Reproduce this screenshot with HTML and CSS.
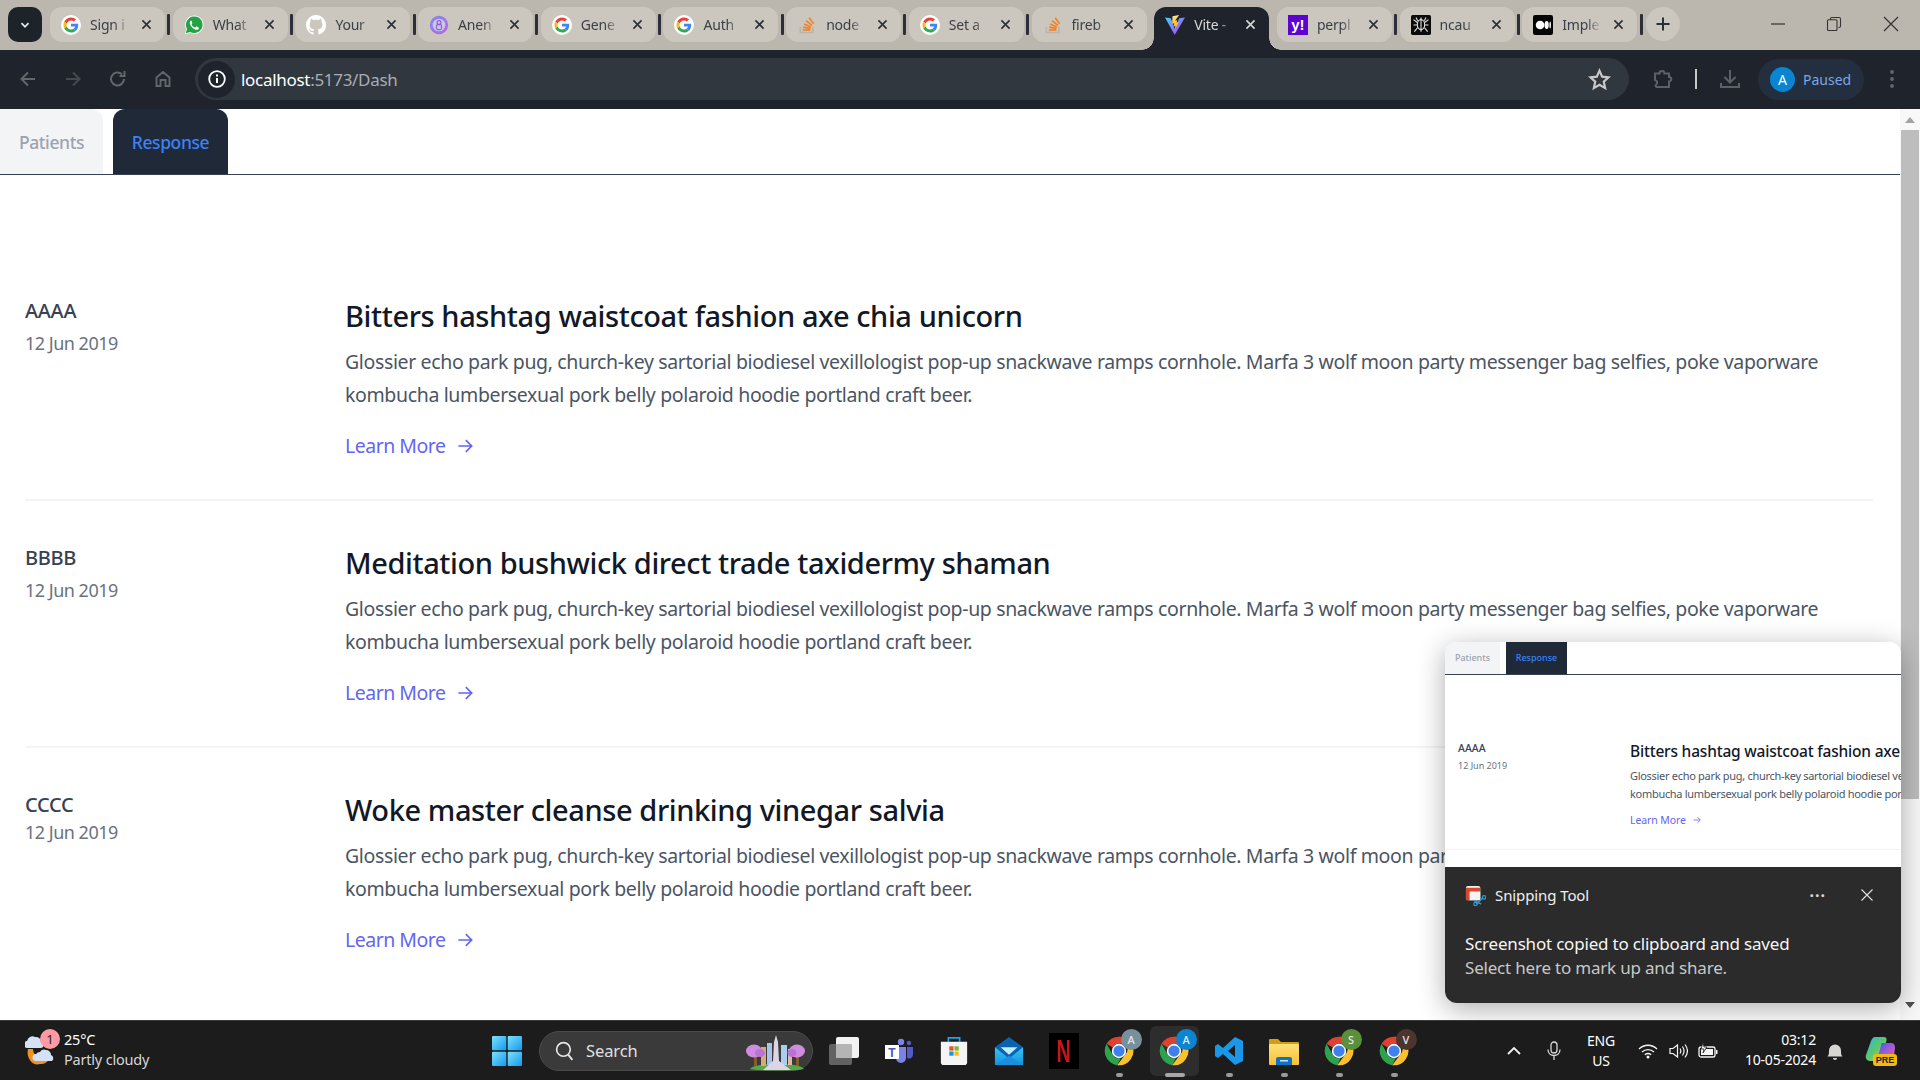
FILE: index.html
```html
<!DOCTYPE html>
<html lang="en">
<head>
<meta charset="utf-8">
<title>Vite + React</title>
<link rel="stylesheet" href="styles.css">
</head>
<body>
<svg class="defs" aria-hidden="true">
  <defs>
    <symbol id="i-g" viewBox="-8 -8 64 64">
      <circle cx="24" cy="24" r="32" fill="#fff"/>
      <path fill="#EA4335" d="M24 9.5c3.54 0 6.71 1.22 9.21 3.6l6.85-6.85C35.9 2.38 30.47 0 24 0 14.62 0 6.51 5.38 2.56 13.22l7.98 6.19C12.43 13.72 17.74 9.5 24 9.5z"/>
      <path fill="#4285F4" d="M46.98 24.55c0-1.57-.15-3.09-.38-4.55H24v9.02h12.94c-.58 2.96-2.26 5.48-4.78 7.18l7.73 6c4.51-4.18 7.09-10.36 7.09-17.65z"/>
      <path fill="#FBBC05" d="M10.53 28.59c-.48-1.45-.76-2.99-.76-4.59s.27-3.14.76-4.59l-7.98-6.19C.92 16.46 0 20.12 0 24c0 3.88.92 7.54 2.56 10.78l7.97-6.19z"/>
      <path fill="#34A853" d="M24 48c6.48 0 11.93-2.13 15.89-5.81l-7.73-6c-2.15 1.45-4.92 2.3-8.16 2.3-6.26 0-11.57-4.22-13.47-9.91l-7.98 6.19C6.51 42.62 14.62 48 24 48z"/>
    </symbol>
    <symbol id="i-wa" viewBox="0 0 24 24">
      <path fill="#fff" d="M1 23l1.8-6A11 11 0 1 1 7 21.2z"/>
      <path fill="#25a244" d="M2 22l1.7-5.2A10 10 0 1 1 7.2 20.3z"/>
      <path fill="#fff" d="M8.6 6.6c-.5 0-1.7 1-1.7 2.7 0 3 3.9 7.6 7.8 8.5 1.6.3 3-.8 3.1-2 .1-.5 0-.8-.2-.9l-2.4-1.2c-.3-.1-.5 0-.7.2l-.9 1.1c-.2.2-.4.2-.7.1-1.6-.7-2.8-1.8-3.7-3.4-.1-.3 0-.4.1-.6l.6-.8c.2-.2.2-.4.1-.6l-1-2.5c-.1-.5-.3-.6-1-.6z"/>
    </symbol>
    <symbol id="i-gh" viewBox="0 0 16 16">
      <path fill="#fff" d="M8 0C3.58 0 0 3.58 0 8c0 3.54 2.29 6.53 5.47 7.59.4.07.55-.17.55-.38 0-.19-.01-.82-.01-1.49-2.01.37-2.53-.49-2.69-.94-.09-.23-.48-.94-.82-1.13-.28-.15-.68-.52-.01-.53.63-.01 1.08.58 1.23.82.72 1.21 1.87.87 2.33.66.07-.52.28-.87.51-1.07-1.78-.2-3.64-.89-3.64-3.95 0-.87.31-1.59.82-2.15-.08-.2-.36-1.02.08-2.12 0 0 .67-.21 2.2.82.64-.18 1.32-.27 2-.27.68 0 1.36.09 2 .27 1.53-1.04 2.2-.82 2.2-.82.44 1.1.16 1.92.08 2.12.51.56.82 1.27.82 2.15 0 3.07-1.87 3.75-3.65 3.95.29.25.54.73.54 1.48 0 1.07-.01 1.93-.01 2.2 0 .21.15.46.55.38A8.013 8.013 0 0016 8c0-4.42-3.58-8-8-8z"/>
    </symbol>
    <linearGradient id="g-an" x1="0" y1="0" x2="1" y2="1"><stop offset="0" stop-color="#7a8cf0"/><stop offset="1" stop-color="#c263e0"/></linearGradient>
    <symbol id="i-an" viewBox="0 0 24 24">
      <circle cx="12" cy="12" r="11" fill="url(#g-an)"/>
      <circle cx="12" cy="12" r="7.6" fill="#cbc7e8"/>
      <circle cx="12" cy="9" r="2.3" fill="none" stroke="#8a5fd8" stroke-width="1.4"/>
      <rect x="9" y="11.5" width="6" height="6" rx="1.5" fill="none" stroke="#8a5fd8" stroke-width="1.4"/>
    </symbol>
    <symbol id="i-so" viewBox="0 0 24 24">
      <path fill="none" stroke="#b9b5ad" stroke-width="2" d="M4 14v7h15v-7"/>
      <path fill="none" stroke="#f48024" stroke-width="2" d="M7 18h9M7.4 14.6l8.8 1.8M8.6 10.7l8 3.8M11 6.8l6.9 5.7M14.6 3.3l5.3 7.1"/>
    </symbol>
    <linearGradient id="g-vt" x1="0" y1="0" x2="1" y2="1"><stop offset="0" stop-color="#41d1ff"/><stop offset="1" stop-color="#bd34fe"/></linearGradient>
    <linearGradient id="g-vb" x1="0" y1="0" x2="0" y2="1"><stop offset="0" stop-color="#ffea83"/><stop offset="1" stop-color="#ffa800"/></linearGradient>
    <symbol id="i-vite" viewBox="0 0 24 24">
      <path fill="url(#g-vt)" d="M0 3l11.6 21L24 3l-7 1-5.200 13L7 3.800z"/>
      <path fill="url(#g-vb)" d="M17 0 9 1.500l-.5 9 2.500-.5-.7 3.800 2.100-.5-.7 4.700 4.800-9.500-2.700.5 1-2.800-2.600.5z"/>
    </symbol>
    <symbol id="i-bug" viewBox="0 0 24 24">
      <rect width="24" height="24" rx="2" fill="#0b0b0b"/>
      <g fill="none" stroke="#e6e6e6" stroke-width="1.3">
        <ellipse cx="12" cy="11.5" rx="4.4" ry="6"/>
        <path d="M12 3v17M7.6 9 3 5.5M16.4 9 21 5.5M7.6 12H3M16.4 12H21M8 15l-4 5M16 15l4 5M8 7 6 3M16 7l2-4"/>
      </g>
    </symbol>
    <symbol id="i-med" viewBox="0 0 24 24">
      <rect width="24" height="24" rx="2.5" fill="#050505"/>
      <ellipse cx="8.5" cy="12" rx="5.2" ry="5.2" fill="#fff"/>
      <ellipse cx="16.4" cy="12" rx="2.5" ry="4.8" fill="#fff"/>
      <ellipse cx="20.6" cy="12" rx=".9" ry="4.3" fill="#fff"/>
    </symbol>
    <symbol id="i-close" viewBox="0 0 16 16">
      <path fill="none" stroke="currentColor" stroke-width="2" d="M3 3l10 10M13 3 3 13"/>
    </symbol>
    <symbol id="i-chrome" viewBox="0 0 48 48">
      <path fill="#e0402f" d="M24 1a23 23 0 0 1 20 11.500H24a11.500 11.500 0 0 0-10 5.800L4.100 12.500A23 23 0 0 1 24 1z"/>
      <path fill="#2fa24f" d="M4.100 12.500 14 29.800a11.500 11.500 0 0 0 13 5.300l-6 11.500A23 23 0 0 1 4.100 12.500z"/>
      <path fill="#fbc02d" d="M44 12.500A23 23 0 0 1 21 46.600l13-17a11.500 11.500 0 0 0 0-17.100z"/>
      <circle cx="24" cy="24" r="11.500" fill="#fff"/>
      <circle cx="24" cy="24" r="9" fill="#3f80ee"/>
    </symbol>
    <linearGradient id="g-win" x1="0" y1="0" x2="1" y2="1"><stop offset="0" stop-color="#7fe0f5"/><stop offset="1" stop-color="#0f9bf5"/></linearGradient>
    <linearGradient id="g-mail" x1="0" y1="0" x2="0" y2="1"><stop offset="0" stop-color="#37c6f5"/><stop offset="1" stop-color="#1590e0"/></linearGradient>
    <linearGradient id="g-cp" x1="0" y1="0" x2="1" y2="1"><stop offset="0" stop-color="#2fb4f0"/><stop offset=".5" stop-color="#5bc86a"/><stop offset="1" stop-color="#f5c63c"/></linearGradient>
    <linearGradient id="g-cp2" x1="0" y1="0" x2="1" y2="1"><stop offset="0" stop-color="#2a62e0"/><stop offset=".5" stop-color="#a55ad8"/><stop offset="1" stop-color="#f0609a"/></linearGradient>
    <linearGradient id="g-fold" x1="0" y1="0" x2="0" y2="1"><stop offset="0" stop-color="#ffe07a"/><stop offset="1" stop-color="#f8c22f"/></linearGradient>
  </defs>
</svg>

<header class="tabstrip">
  <button class="tab-menu"><svg class="i12" viewBox="0 0 12 12"><path d="M2.500 4.200 6 7.800l3.500-3.600" fill="none" stroke="#e8e8e8" stroke-width="1.800"/></svg></button>
  <div class="tab"><svg class="fav"><use href="#i-g"/></svg><span class="tab-t">Sign i</span><svg class="tab-x"><use href="#i-close"/></svg></div><i class="sep"></i>
  <div class="tab"><svg class="fav"><use href="#i-wa"/></svg><span class="tab-t">What</span><svg class="tab-x"><use href="#i-close"/></svg></div><i class="sep"></i>
  <div class="tab"><svg class="fav"><use href="#i-gh"/></svg><span class="tab-t">Your</span><svg class="tab-x"><use href="#i-close"/></svg></div><i class="sep"></i>
  <div class="tab"><svg class="fav"><use href="#i-an"/></svg><span class="tab-t">Anen</span><svg class="tab-x"><use href="#i-close"/></svg></div><i class="sep"></i>
  <div class="tab"><svg class="fav"><use href="#i-g"/></svg><span class="tab-t">Gene</span><svg class="tab-x"><use href="#i-close"/></svg></div><i class="sep"></i>
  <div class="tab"><svg class="fav"><use href="#i-g"/></svg><span class="tab-t">Auth</span><svg class="tab-x"><use href="#i-close"/></svg></div><i class="sep"></i>
  <div class="tab"><svg class="fav"><use href="#i-so"/></svg><span class="tab-t">node</span><svg class="tab-x"><use href="#i-close"/></svg></div><i class="sep"></i>
  <div class="tab"><svg class="fav"><use href="#i-g"/></svg><span class="tab-t">Set a</span><svg class="tab-x"><use href="#i-close"/></svg></div><i class="sep"></i>
  <div class="tab"><svg class="fav"><use href="#i-so"/></svg><span class="tab-t">fireb</span><svg class="tab-x"><use href="#i-close"/></svg></div><i class="sep sep-off"></i>
  <div class="tab tab-on"><svg class="fav"><use href="#i-vite"/></svg><span class="tab-t">Vite -</span><svg class="tab-x"><use href="#i-close"/></svg></div><i class="sep sep-off"></i>
  <div class="tab"><span class="fav fav-y">y!</span><span class="tab-t">perpl</span><svg class="tab-x"><use href="#i-close"/></svg></div><i class="sep"></i>
  <div class="tab"><svg class="fav"><use href="#i-bug"/></svg><span class="tab-t">ncau</span><svg class="tab-x"><use href="#i-close"/></svg></div><i class="sep"></i>
  <div class="tab"><svg class="fav"><use href="#i-med"/></svg><span class="tab-t">Imple</span><svg class="tab-x"><use href="#i-close"/></svg></div><i class="sep"></i>
  <button class="tab-new"><svg class="i16" viewBox="0 0 16 16"><path d="M8 1.500v13M1.500 8h13" stroke="#2a2e35" stroke-width="2" fill="none"/></svg></button>
  <div class="win-ctl">
    <svg class="i16" viewBox="0 0 16 16"><path d="M1 8h14" stroke="#333" stroke-width="1.200"/></svg>
    <svg class="i16" viewBox="0 0 16 16"><path d="M4.500 3.500V2.800c0-.9.600-1.300 1.300-1.300H13c.8 0 1.500.6 1.500 1.500v7c0 .8-.5 1.500-1.500 1.500h-.5M2.500 3.800h7.500c.6 0 1 .4 1 1v8.700c0 .6-.4 1-1 1H2.500c-.6 0-1-.4-1-1V4.800c0-.6.400-1 1-1z" fill="none" stroke="#333" stroke-width="1.100"/></svg>
    <svg class="i16" viewBox="0 0 16 16"><path d="M1 1l14 14M15 1 1 15" stroke="#333" stroke-width="1.200"/></svg>
  </div>
</header>

<nav class="toolbar">
  <span class="nav-btn"><svg class="i20" viewBox="0 0 20 20"><path d="M17 10H4M10 3.500 3.500 10l6.500 6.500" fill="none" stroke="#63666b" stroke-width="2"/></svg></span>
  <span class="nav-btn"><svg class="i20" viewBox="0 0 20 20"><path d="M3 10h13M10 3.500l6.500 6.500-6.500 6.500" fill="none" stroke="#46494e" stroke-width="2"/></svg></span>
  <span class="nav-btn"><svg class="i20" viewBox="0 0 20 20"><path d="M16 10a6.500 6.500 0 1 1-1.900-4.600M16.500 2v5h-5" fill="none" stroke="#63666b" stroke-width="2"/></svg></span>
  <span class="nav-btn"><svg class="i20" viewBox="0 0 20 20"><path d="M3.500 17V8.500L10 3l6.500 5.500V17h-4v-6h-5v6z" fill="none" stroke="#63666b" stroke-width="1.900"/></svg></span>
  <div class="omni">
    <span class="omni-info"><svg class="i20" viewBox="0 0 20 20"><circle cx="10" cy="10" r="7.800" fill="none" stroke="#fff" stroke-width="1.800"/><path d="M10 9v5M10 5.500v2" stroke="#fff" stroke-width="2"/></svg></span>
    <span class="omni-url"><b>localhost</b>:5173/Dash</span>
    <svg class="omni-star" viewBox="0 0 20 20"><path d="m10 2.300 2.300 5.200 5.600.6-4.200 3.800 1.200 5.600L10 14.600l-4.900 2.900 1.200-5.600L2.100 8.100l5.600-.6z" fill="none" stroke="#c9c9c9" stroke-width="1.900"/></svg>
  </div>
  <span class="tool-btn tool-ext"><svg class="i20" viewBox="0 0 20 20"><path d="M2 4.500h4.500a2.500 2.500 0 0 1 5 0H16V8a2 2 0 0 1 0 4.500V18H3.500L2.500 16.500 4 14.500a3 3 0 0 0-2-3.500z" fill="none" stroke="#5d6065" stroke-width="2"/></svg></span>
  <i class="tool-sep"></i>
  <span class="tool-btn tool-dl"><svg class="i20" viewBox="0 0 20 20"><path d="M10 1v12M4.500 8l5.500 5.500L15.500 8M1 14v4h18v-4" fill="none" stroke="#5d6065" stroke-width="2"/></svg></span>
  <div class="profile"><span class="avatar">A</span><span class="profile-t">Paused</span></div>
  <span class="tool-btn tool-more"><svg class="i20" viewBox="0 0 20 20"><g fill="#63666b"><circle cx="10" cy="3" r="1.900"/><circle cx="10" cy="10" r="1.900"/><circle cx="10" cy="17" r="1.900"/></g></svg></span>
</nav>

<main class="page">
  <div class="content">
    <div class="page-tabs">
      <a class="ptab">Patients</a>
      <a class="ptab ptab-on">Response</a>
    </div>
    <section class="list">
      <article class="row">
        <div class="meta"><div class="name">AAAA</div><div class="date">12 Jun 2019</div></div>
        <div class="body">
          <h2 class="title">Bitters hashtag waistcoat fashion axe chia unicorn</h2>
          <p class="text">Glossier echo park pug, church-key sartorial biodiesel vexillologist pop-up snackwave ramps cornhole. Marfa 3 wolf moon party messenger bag selfies, poke vaporware<br>kombucha lumbersexual pork belly polaroid hoodie portland craft beer.</p>
          <a class="more">Learn More <svg class="arrow" viewBox="0 0 24 24"><path d="M4 12h15M13 5l7 7-7 7" fill="none" stroke="currentColor" stroke-width="2"/></svg></a>
        </div>
      </article>
      <article class="row">
        <div class="meta"><div class="name">BBBB</div><div class="date">12 Jun 2019</div></div>
        <div class="body">
          <h2 class="title">Meditation bushwick direct trade taxidermy shaman</h2>
          <p class="text">Glossier echo park pug, church-key sartorial biodiesel vexillologist pop-up snackwave ramps cornhole. Marfa 3 wolf moon party messenger bag selfies, poke vaporware<br>kombucha lumbersexual pork belly polaroid hoodie portland craft beer.</p>
          <a class="more">Learn More <svg class="arrow" viewBox="0 0 24 24"><path d="M4 12h15M13 5l7 7-7 7" fill="none" stroke="currentColor" stroke-width="2"/></svg></a>
        </div>
      </article>
      <article class="row row-last">
        <div class="meta"><div class="name">CCCC</div><div class="date date-tight">12 Jun 2019</div></div>
        <div class="body">
          <h2 class="title">Woke master cleanse drinking vinegar salvia</h2>
          <p class="text">Glossier echo park pug, church-key sartorial biodiesel vexillologist pop-up snackwave ramps cornhole. Marfa 3 wolf moon party messenger bag selfies, poke vaporware<br>kombucha lumbersexual pork belly polaroid hoodie portland craft beer.</p>
          <a class="more">Learn More <svg class="arrow" viewBox="0 0 24 24"><path d="M4 12h15M13 5l7 7-7 7" fill="none" stroke="currentColor" stroke-width="2"/></svg></a>
        </div>
      </article>
    </section>
  </div>
  <aside class="scrollbar">
    <span class="sb-up"></span>
    <span class="sb-thumb"></span>
    <span class="sb-down"></span>
  </aside>

  <div class="toast">
    <div class="shot">
      <div class="shot-tabs"><span class="stab">Patients</span><span class="stab stab-on">Response</span></div>
      <div class="shot-row">
        <div class="shot-meta"><div class="shot-name">AAAA</div><div class="shot-date">12 Jun 2019</div></div>
        <div class="shot-body">
          <div class="shot-title">Bitters hashtag waistcoat fashion axe</div>
          <div class="shot-text">Glossier echo park pug, church-key sartorial biodiesel vex<br>kombucha lumbersexual pork belly polaroid hoodie portl</div>
          <div class="shot-more">Learn More <svg class="shot-arrow" viewBox="0 0 24 24"><path d="M4 12h15M13 5l7 7-7 7" fill="none" stroke="currentColor" stroke-width="2"/></svg></div>
        </div>
      </div>
    </div>
    <div class="toast-dark">
      <div class="toast-head">
        <svg class="snip" viewBox="0 0 22 22"><rect x="1" y="1" width="15" height="15" rx="2" fill="#f4f4f4"/><path d="M1 3h15v4H1zM1 3h4v13H1z" fill="#d8492c"/><rect x="5" y="7" width="11" height="9" fill="#f4f4f4"/><path d="M9 16l8 4M12 20l7-7" stroke="#2b9fd8" stroke-width="1.500" fill="none"/><circle cx="11" cy="20" r="1.800" fill="none" stroke="#2b9fd8" stroke-width="1.200"/><circle cx="20" cy="13" r="1.800" fill="none" stroke="#2b9fd8" stroke-width="1.200"/></svg>
        <span class="toast-app">Snipping Tool</span>
        <span class="toast-dots">···</span>
        <svg class="toast-x" viewBox="0 0 14 14"><path d="M1.500 1.500l11 11M12.500 1.500l-11 11" stroke="#e0e0e0" stroke-width="1.100" fill="none"/></svg>
      </div>
      <div class="toast-l1">Screenshot copied to clipboard and saved</div>
      <div class="toast-l2">Select here to mark up and share.</div>
    </div>
  </div>
</main>

<footer class="taskbar">
  <div class="weather">
    <span class="w-icon">
      <svg class="w-svg" viewBox="0 0 32 36"><path d="M3 16a10 12 0 0 0 12 15c5 0 8-2 9-6-8 2-16-2-16-9z" fill="#ee9520"/><path d="M11 28a3.500 3.500 0 0 1 0-7 5 5 0 0 1 4-2 5 5 0 0 1 6-2 5 5 0 0 1 5 5 3.500 3.500 0 0 1 1 6z" fill="#d3e2f6"/><path d="M3 15a3.500 3.500 0 0 1-1-7 5.500 5.500 0 0 1 8-4 5 5 0 0 1 6 5 3 3 0 0 1-1 6z" fill="#d3e2f6"/></svg>
      <span class="w-badge">1</span>
    </span>
    <span class="w-text"><span class="w-temp">25°C</span><span class="w-desc">Partly cloudy</span></span>
  </div>
  <span class="start"><svg class="win" viewBox="0 0 30 30"><g fill="url(#g-win)"><rect width="14.300" height="14.300" rx="1"/><rect x="15.700" width="14.300" height="14.300" rx="1"/><rect y="15.700" width="14.300" height="14.300" rx="1"/><rect x="15.700" y="15.700" width="14.300" height="14.300" rx="1"/></g></svg></span>
  <div class="search">
    <svg class="s-icon" viewBox="0 0 20 20"><circle cx="9" cy="8.500" r="6.500" fill="none" stroke="#e6e6e6" stroke-width="1.600"/><path d="M13.500 13.500 17.500 18.500" stroke="#e6e6e6" stroke-width="1.800"/></svg>
    <span class="s-text">Search</span>
    <svg class="s-art" viewBox="0 0 64 44"><path d="M5 40c4-7 50-7 54 0-6 2-48 2-54 0z" fill="#58a846"/><rect x="16" y="18" width="5" height="19" fill="#d8a878"/><rect x="22" y="14" width="5" height="22" fill="#a8c4ec"/><rect x="36" y="16" width="6" height="20" fill="#a8d0ee"/><rect x="43" y="20" width="4" height="16" fill="#e0b8a0"/><path d="M18 41 28 32 29 13 31 6l2 7 1 19 12 9z" fill="#ddd4e6"/><path d="M9 26h3v11H9zM51 26h3v11h-3z" fill="#8a5a2a"/><ellipse cx="9" cy="22" rx="8" ry="6.500" fill="#cf8ce0"/><ellipse cx="15" cy="24" rx="5" ry="4" fill="#b873d4"/><ellipse cx="52" cy="22" rx="8" ry="6.500" fill="#cf8ce0"/><ellipse cx="47" cy="24" rx="4.500" ry="4" fill="#b873d4"/></svg>
  </div>
  <div class="apps">
    <span class="app"><svg class="a30" viewBox="0 0 30 30"><rect x="0" y="8" width="23" height="21" rx="2" fill="#626262"/><rect x="7" y="1" width="23" height="21" rx="2" fill="#f2f2f2"/><rect x="7" y="8" width="16" height="14" rx="1" fill="#b4b4b4"/></svg></span>
    <span class="app"><svg class="a30" viewBox="0 0 30 30"><circle cx="17" cy="6" r="3.200" fill="#7b83eb"/><circle cx="25" cy="7" r="2.300" fill="#5059c9"/><path d="M12 11h10v11a5 5 0 0 1-10 0z" fill="#7b83eb"/><path d="M23 11h6v8a4 4 0 0 1-6 3z" fill="#5059c9"/><rect x="1" y="9" width="14" height="14" fill="#fff"/><text class="t-letter" x="8" y="20.500">T</text></svg></span>
    <span class="app"><svg class="a30" viewBox="0 0 30 32"><path d="M9 6V2h12v4" fill="none" stroke="#1aa5e8" stroke-width="1.800"/><path d="M1 6h28v22a3 3 0 0 1-3 3H4a3 3 0 0 1-3-3z" fill="#f4f4f4"/><rect x="10" y="11" width="4.500" height="4.500" fill="#e8502a"/><rect x="15.500" y="11" width="4.500" height="4.500" fill="#7fba2a"/><rect x="10" y="16.500" width="4.500" height="4.500" fill="#0d98e8"/><rect x="15.500" y="16.500" width="4.500" height="4.500" fill="#fdb90f"/></svg></span>
    <span class="app"><svg class="a30" viewBox="0 0 30 32"><path d="M15 1 30 12v19H0V12z" fill="#0b62b0"/><path d="M0 12l15 12 15-12v19H0z" fill="url(#g-mail)"/><path d="M0 31l15-10 15 10z" fill="#1a8fdd"/><path d="M6 12h18l-9 8z" fill="#bdeefb"/></svg></span>
    <span class="app"><span class="netflix"><span class="netflix-n">N</span></span></span>
    <span class="app app-c"><svg class="a30"><use href="#i-chrome"/></svg><span class="ch-badge b-grey">A</span><i class="dot"></i></span>
    <span class="app app-c app-on"><svg class="a30"><use href="#i-chrome"/></svg><span class="ch-badge b-blue">A</span><i class="dot dot-on"></i></span>
    <span class="app app-c"><svg class="a30" viewBox="0 0 30 30"><path d="M21 1 29 5v20l-8 4-12-11-5 4-3-2v-10l3-2 5 4zm0 8-7 6 7 6z" fill="#1a97e8"/></svg><i class="dot"></i></span>
    <span class="app app-c"><svg class="a30" viewBox="0 0 30 30"><path d="M0 4a1 1 0 0 1 1-1h8l3 3h17a1 1 0 0 1 1 1v20H0z" fill="#d99a14"/><rect y="8" width="30" height="21" rx="1" fill="url(#g-fold)"/><path d="M7 23a2 2 0 0 1 2-2h12a2 2 0 0 1 2 2v6H7z" fill="#0f72c4"/><rect x="11" y="24" width="8" height="1.500" fill="#bfe6ff"/></svg><i class="dot"></i></span>
    <span class="app app-c"><svg class="a30"><use href="#i-chrome"/></svg><span class="ch-badge b-green">S</span><i class="dot"></i></span>
    <span class="app app-c"><svg class="a30"><use href="#i-chrome"/></svg><span class="ch-badge b-brown">V</span><i class="dot"></i></span>
  </div>
  <div class="tray">
    <span class="t-caret"><svg class="i16" viewBox="0 0 16 16"><path d="M2 11l6-6 6 6" fill="none" stroke="#f0f0f0" stroke-width="1.800"/></svg></span>
    <span class="t-mic"><svg class="i20" viewBox="0 0 20 20"><rect x="7" y="1" width="6" height="11" rx="3" fill="none" stroke="#d8d8d8" stroke-width="1.300"/><path d="M4 8.500c0 8 12 8 12 0M10 15v4" fill="none" stroke="#d8d8d8" stroke-width="1.300"/></svg></span>
    <span class="t-lang">ENG<br>US</span>
    <span class="t-ico t-wifi"><svg class="i20" viewBox="0 0 20 20"><path d="M1 8c5-5 13-5 18 0M4 11c3.500-3.300 8.500-3.300 12 0M6.800 13.800c2-1.600 4.400-1.600 6.400 0" fill="none" stroke="#f5f5f5" stroke-width="1.300"/><circle cx="10" cy="16" r="1.500" fill="#f5f5f5"/></svg></span>
    <span class="t-ico"><svg class="i20" viewBox="0 0 20 20"><path d="M2 7.500h3L9.500 4v12L5 12.500H2z" fill="none" stroke="#f5f5f5" stroke-width="1.200"/><path d="M12 7.500c1 1.500 1 3.500 0 5M14.500 5.500c2 3 2 6 0 9M17 3.500c3 4 3 9 0 13" fill="none" stroke="#f5f5f5" stroke-width="1.200"/></svg></span>
    <span class="t-ico"><svg class="i20" viewBox="0 0 20 20"><rect x="1" y="6" width="16" height="10" rx="2" fill="none" stroke="#f5f5f5" stroke-width="1.300"/><rect x="18" y="9" width="1.500" height="4" fill="#f5f5f5"/><rect x="3" y="8" width="12" height="6" fill="#f5f5f5"/><path d="M5 1.500 3 8h3l-1 4 4-6H6z" fill="#f5f5f5" stroke="#1c1c1c" stroke-width=".8"/></svg></span>
    <span class="t-clock">03:12<br>10-05-2024</span>
    <span class="t-bell"><svg class="i20" viewBox="0 0 20 20"><path d="M2.500 15.500c1.500-1.500 1.500-3 1.500-6a6 6 0 0 1 12 0c0 3 0 4.500 1.500 6z" fill="#d8d6d2"/><path d="M8 17h4a2 2 0 0 1-4 0z" fill="#d8d6d2"/></svg></span>
    <span class="t-copilot">
      <svg class="cp-svg" viewBox="0 0 30 26"><path d="M10 1h9c3 0 3 3 2 5l-6 15c-1 3-3 4-6 4H5c-3 0-5-3-4-6L6 5c1-2 2-4 4-4z" fill="url(#g-cp)"/><path d="M17 7h9c3 0 4 2 4 5l-1 8c-1 3-3 5-6 5h-9c-2 0-2-3-1-5l3-10c0-2 0-3 1-3z" fill="url(#g-cp2)"/></svg>
      <span class="cp-pre">PRE</span>
    </span>
  </div>
</footer>
</body>
</html>
```

FILE: styles.css
```css
* { box-sizing: border-box; }
html, body { margin: 0; height: 100%; }
body {
  display: flex;
  flex-direction: column;
  width: 1920px;
  height: 1080px;
  overflow: hidden;
  font-family: "Noto Sans", "Open Sans", "Liberation Sans", sans-serif;
  background: #fff;
}
.defs { position: absolute; width: 0; height: 0; }
.i12 { width: 12px; height: 12px; }
.i16 { width: 16px; height: 16px; display: block; }
.i20 { width: 20px; height: 20px; display: block; }
button { border: 0; padding: 0; font: inherit; }

/* tab strip */
.tabstrip {
  flex: none;
  height: 50px;
  background: #bbb6ae;
  display: flex;
  align-items: flex-start;
  padding: 7px 0 0 8px;
}
.tab-menu {
  width: 34px;
  height: 35px;
  margin-right: 8px;
  border-radius: 10px;
  background: #1c2329;
  display: flex;
  align-items: center;
  justify-content: center;
}
.tab {
  flex: none;
  position: relative;
  width: 115px;
  height: 35px;
  border-radius: 12px;
  background: #cbc7bf;
  display: flex;
  align-items: center;
  padding: 0 12px 0 11px;
  color: #3b3f45;
}
.fav { flex: none; width: 20px; height: 20px; display: block; }
.fav-y {
  background: #5f01d1;
  color: #fff;
  font: 700 15px/20px "Liberation Sans", sans-serif;
  text-align: center;
}
.tab-t {
  flex: 1;
  margin-left: 9px;
  min-width: 0;
  overflow: hidden;
  white-space: nowrap;
  font-size: 14px;
  letter-spacing: -.2px;
  line-height: 20px;
  -webkit-mask-image: linear-gradient(90deg, #000 60%, transparent 100%);
  mask-image: linear-gradient(90deg, #000 60%, transparent 100%);
}
.tab-x { flex: none; width: 13px; height: 13px; margin-left: 10px; color: #2b3036; }
.sep { flex: none; width: 3px; height: 21px; margin: 7px 2.350px 0; background: #2c3036; border-radius: 1px; }
.sep-off { background: transparent; }
.tab-on {
  height: 43px;
  border-radius: 12px 12px 0 0;
  background: #1f232b;
  color: #d8d8d8;
  align-items: flex-start;
  padding-top: 8px;
}
.tab-on .tab-x { color: #d8d8d8; margin-top: 3px; }
.tab-on::before, .tab-on::after {
  content: "";
  position: absolute;
  bottom: 0;
  width: 12px;
  height: 12px;
}
.tab-on::before { left: -12px; background: radial-gradient(circle at 0 0, transparent 11.500px, #1f232b 12px); }
.tab-on::after { right: -12px; background: radial-gradient(circle at 100% 0, transparent 11.500px, #1f232b 12px); }
.tab-new {
  flex: none;
  width: 34px;
  height: 34px;
  margin-left: 1px;
  border-radius: 50%;
  background: #cbc7bf;
  display: flex;
  align-items: center;
  justify-content: center;
}
.win-ctl {
  flex: none;
  margin-left: 90px;
  width: 129px;
  display: flex;
  justify-content: space-between;
  padding-top: 9px;
}

/* toolbar */
.toolbar {
  flex: none;
  height: 59px;
  background: #1f232b;
  display: flex;
  align-items: center;
  padding: 0 0 1px 5px;
}
.nav-btn { flex: none; width: 45px; display: flex; justify-content: center; }
.omni {
  flex: none;
  width: 1434px;
  height: 42px;
  margin-left: 10px;
  border-radius: 21px;
  background: #30373f;
  display: flex;
  align-items: center;
  padding: 0 14px 0 3px;
}
.omni-info {
  flex: none;
  width: 37px;
  height: 37px;
  border-radius: 50%;
  background: #1f232b;
  display: flex;
  align-items: center;
  justify-content: center;
}
.omni-url { flex: 1; margin-left: 6px; font-size: 17px; letter-spacing: -.3px; color: #a9adb2; }
.omni-url b { font-weight: 400; color: #fff; }
.omni-star { flex: none; width: 23px; height: 23px; margin-right: 4px; }
.tool-btn { flex: none; display: flex; justify-content: center; }
.tool-ext { width: 40px; margin-left: 14px; }
.tool-sep { flex: none; width: 2px; height: 20px; margin: 0 13px 0 12px; background: #c9c9c9; }
.tool-dl { width: 40px; margin-left: 0; }
.profile {
  flex: none;
  width: 106px;
  height: 41px;
  margin-left: 8px;
  border-radius: 21px;
  background: #232f3e;
  display: flex;
  align-items: center;
  padding-left: 12px;
}
.avatar {
  flex: none;
  width: 25px;
  height: 25px;
  border-radius: 50%;
  background: #0a85d1;
  color: #fff;
  font-size: 14px;
  line-height: 25px;
  text-align: center;
}
.profile-t { margin-left: 8px; font-size: 14px; color: #7ba6e8; }
.tool-more { width: 56px; }

/* page */
.page { flex: none; position: relative; height: 911px; display: flex; overflow: hidden; background: #fff; }
.content { flex: 1; min-width: 0; }
.page-tabs { display: flex; gap: 10px; height: 66px; border-bottom: 1px solid #374151; }
.ptab {
  width: 103px;
  height: 65px;
  background: #f3f4f6;
  border-radius: 0 12px 0 0;
  color: #9ca3af;
  font-size: 17.500px;
  font-weight: 500;
  letter-spacing: -.4px;
  line-height: 66px;
  text-align: center;
}
.ptab-on { width: 115px; background: #1f2937; color: #3b82f6; border-radius: 12px 12px 0 0; }
.list { padding: 79px 27px 0 25px; }
.row { display: flex; height: 247px; padding-top: 42px; border-bottom: 2px solid #f3f4f6; }
.row-last { border-bottom: 0; }
.meta { flex: none; width: 320px; padding-top: 1px; }
.name { font-size: 20px; font-weight: 500; line-height: 28px; color: #374151; letter-spacing: -.3px; }
.date { font-size: 18px; line-height: 24px; margin-top: 6px; color: #6b7280; letter-spacing: -.5px; }
.date-tight { margin-top: 1px; }
.body { flex: 1; min-width: 0; }
.title { margin: 0; font-size: 29px; font-weight: 500; line-height: 40px; color: #111827; letter-spacing: -.4px; }
.text { margin: 9px 0 0; font-size: 19.500px; line-height: 33px; color: #4b5563; white-space: nowrap; letter-spacing: -.36px; }
.more { display: flex; align-items: center; margin-top: 21px; font-size: 19.500px; line-height: 28px; color: #6366f1; letter-spacing: -.5px; }
.arrow { width: 20px; height: 20px; margin-left: 10px; }

/* scrollbar */
.scrollbar { flex: none; width: 20px; background: #f8f8f8; display: flex; flex-direction: column; align-items: center; position: relative; z-index: 3; }
.sb-up { width: 0; height: 0; margin: 8px 0 7px; border: 5px solid transparent; border-top: 0; border-bottom: 6px solid #a3a3a3; }
.sb-thumb { width: 18px; height: 669px; background: #bdbdbd; }
.sb-down { width: 0; height: 0; margin-top: 203px; border: 5px solid transparent; border-bottom: 0; border-top: 6px solid #505050; }

/* toast */
.toast {
  position: absolute;
  z-index: 4;
  left: 1445px;
  top: 533px;
  width: 456px;
  height: 361px;
  border-radius: 12px;
  overflow: hidden;
  display: flex;
  flex-direction: column;
  box-shadow: 0 6px 28px rgba(0, 0, 0, .32);
}
.shot { flex: none; height: 225px; background: #fff; overflow: hidden; }
.shot-tabs { display: flex; gap: 6px; height: 33px; border-bottom: 1px solid #374151; }
.stab { width: 55px; height: 32px; background: #f3f4f6; color: #9ca3af; font-size: 9px; font-weight: 500; line-height: 31px; text-align: center; }
.stab-on { width: 61px; background: #1f2937; color: #3b82f6; }
.shot-row { display: flex; padding: 66px 0 0 13px; width: 640px; height: 175px; border-bottom: 1px solid #f3f4f6; }
.shot-meta { flex: none; width: 172px; }
.shot-name { font-size: 10.500px; font-weight: 500; line-height: 14px; color: #374151; }
.shot-date { font-size: 9px; line-height: 12px; margin-top: 5px; color: #6b7280; }
.shot-body { flex: none; width: 440px; margin-top: -1px; }
.shot-title { font-size: 15.500px; font-weight: 500; line-height: 22px; color: #111827; white-space: nowrap; letter-spacing: -.2px; }
.shot-text { margin-top: 5px; font-size: 11px; line-height: 18px; color: #4b5563; white-space: nowrap; letter-spacing: -.3px; }
.shot-more { display: flex; align-items: center; margin-top: 10px; font-size: 10.500px; line-height: 14px; letter-spacing: -.1px; color: #6366f1; }
.shot-arrow { width: 10px; height: 10px; margin-left: 6px; }
.toast-dark { flex: 1; background: #2b2b2b; color: #fff; padding: 16px 20px 0; }
.toast-head { display: flex; align-items: center; height: 24px; }
.snip { flex: none; width: 21px; height: 21px; }
.toast-app { flex: 1; margin-left: 9px; font-size: 15px; letter-spacing: -.1px; color: #f0f0f0; }
.toast-dots { margin-right: 34px; font-size: 16px; font-weight: 700; letter-spacing: 1px; color: #d8d8d8; }
.toast-x { width: 14px; height: 14px; margin-right: 7px; }
.toast-l1 { margin-top: 25px; font-size: 17px; line-height: 24px; letter-spacing: -.2px; color: #f6f6f6; }
.toast-l2 { font-size: 17px; line-height: 24px; letter-spacing: -.2px; color: #c8c8c8; }

/* taskbar */
.taskbar {
  flex: none;
  position: relative;
  z-index: 5;
  height: 60px;
  background: #1c1c1c;
  border-top: 1px solid #3a3a3a;
  display: flex;
  align-items: center;
  color: #fff;
}
.weather { flex: none; width: 484px; display: flex; align-items: center; padding-left: 25px; }
.w-icon { position: relative; flex: none; width: 32px; height: 36px; }
.w-svg { width: 32px; height: 36px; display: block; }
.w-badge {
  position: absolute;
  left: 15px;
  top: -4px;
  width: 20px;
  height: 20px;
  border-radius: 50%;
  background: #ff9aa5;
  color: #222;
  font-size: 13px;
  line-height: 20px;
  text-align: center;
}
.w-text { display: flex; flex-direction: column; margin-left: 7px; margin-top: -3px; font-size: 14.500px; line-height: 20px; letter-spacing: -.2px; }
.w-desc { color: #d6d6d6; }
.start { flex: none; width: 46px; display: flex; justify-content: center; }
.win { width: 30px; height: 30px; display: block; }
.search {
  flex: none;
  width: 274px;
  height: 40px;
  margin-left: 9px;
  border-radius: 20px;
  background: #3a3a3a;
  border: 1px solid #4a4a4a;
  display: flex;
  align-items: center;
  padding: 0 3px 0 14px;
}
.s-icon { flex: none; width: 21px; height: 22px; }
.s-text { flex: 1; margin-left: 11px; font-size: 16.500px; color: #e0e0e0; letter-spacing: -.1px; }
.s-art { flex: none; width: 64px; height: 44px; }
.apps { flex: none; display: flex; margin-left: 3.500px; }
.app { position: relative; flex: none; width: 55px; height: 50px; display: flex; align-items: center; justify-content: center; }
.a30 { width: 30px; height: 30px; display: block; }
.t-letter { font: 700 12px "Liberation Sans", sans-serif; fill: #4b53bc; text-anchor: middle; }
.netflix {
  width: 30px;
  height: 36px;
  background: #000;
  color: #c9141c;
  font: 700 32px/36px "Liberation Sans", sans-serif;
  text-align: center;
}
.netflix-n { display: inline-block; transform: scaleX(.62); }
.app-on::before {
  content: "";
  position: absolute;
  left: 3px;
  right: 3px;
  top: 0;
  bottom: 0;
  border-radius: 6px;
  background: #2d2d2d;
}
.app-on > svg { position: relative; }
.ch-badge {
  position: absolute;
  left: 29px;
  top: 3px;
  width: 21px;
  height: 21px;
  border-radius: 50%;
  color: #e6e6e6;
  font-size: 11px;
  font-weight: 500;
  line-height: 21px;
  text-align: center;
}
.b-grey { background: #78909c; }
.b-blue { background: #0a85d1; }
.b-green { background: #5b8f3a; }
.b-brown { background: #4e342e; }
.dot { position: absolute; left: 24px; bottom: -1px; width: 7px; height: 4px; border-radius: 2px; background: #9a9a9a; }
.dot-on { left: 18px; width: 20px; background: #a8a8a8; }
.tray { flex: none; margin-left: auto; display: flex; align-items: center; padding-right: 14px; }
.t-caret { flex: none; width: 46px; display: flex; justify-content: center; }
.t-mic { flex: none; width: 34px; margin-right: 6px; display: flex; justify-content: center; }
.t-lang { flex: none; width: 48px; font-size: 14px; line-height: 20px; text-align: center; letter-spacing: -.2px; }
.t-ico { flex: none; width: 30px; display: flex; justify-content: center; }
.t-wifi { margin-left: 8px; }
.t-clock { flex: none; width: 93px; margin-top: -2px; font-size: 14px; line-height: 20px; text-align: right; letter-spacing: -.2px; }
.t-bell { flex: none; width: 38px; display: flex; justify-content: center; }
.t-copilot { position: relative; flex: none; width: 52px; height: 30px; display: flex; justify-content: center; }
.cp-svg { width: 30px; height: 26px; display: block; }
.cp-pre {
  position: absolute;
  left: 19px;
  top: 18px;
  width: 24px;
  height: 12px;
  border-radius: 3px;
  background: #f2b90f;
  color: #222;
  font: 700 9px/12px "Liberation Sans", sans-serif;
  text-align: center;
}
```
